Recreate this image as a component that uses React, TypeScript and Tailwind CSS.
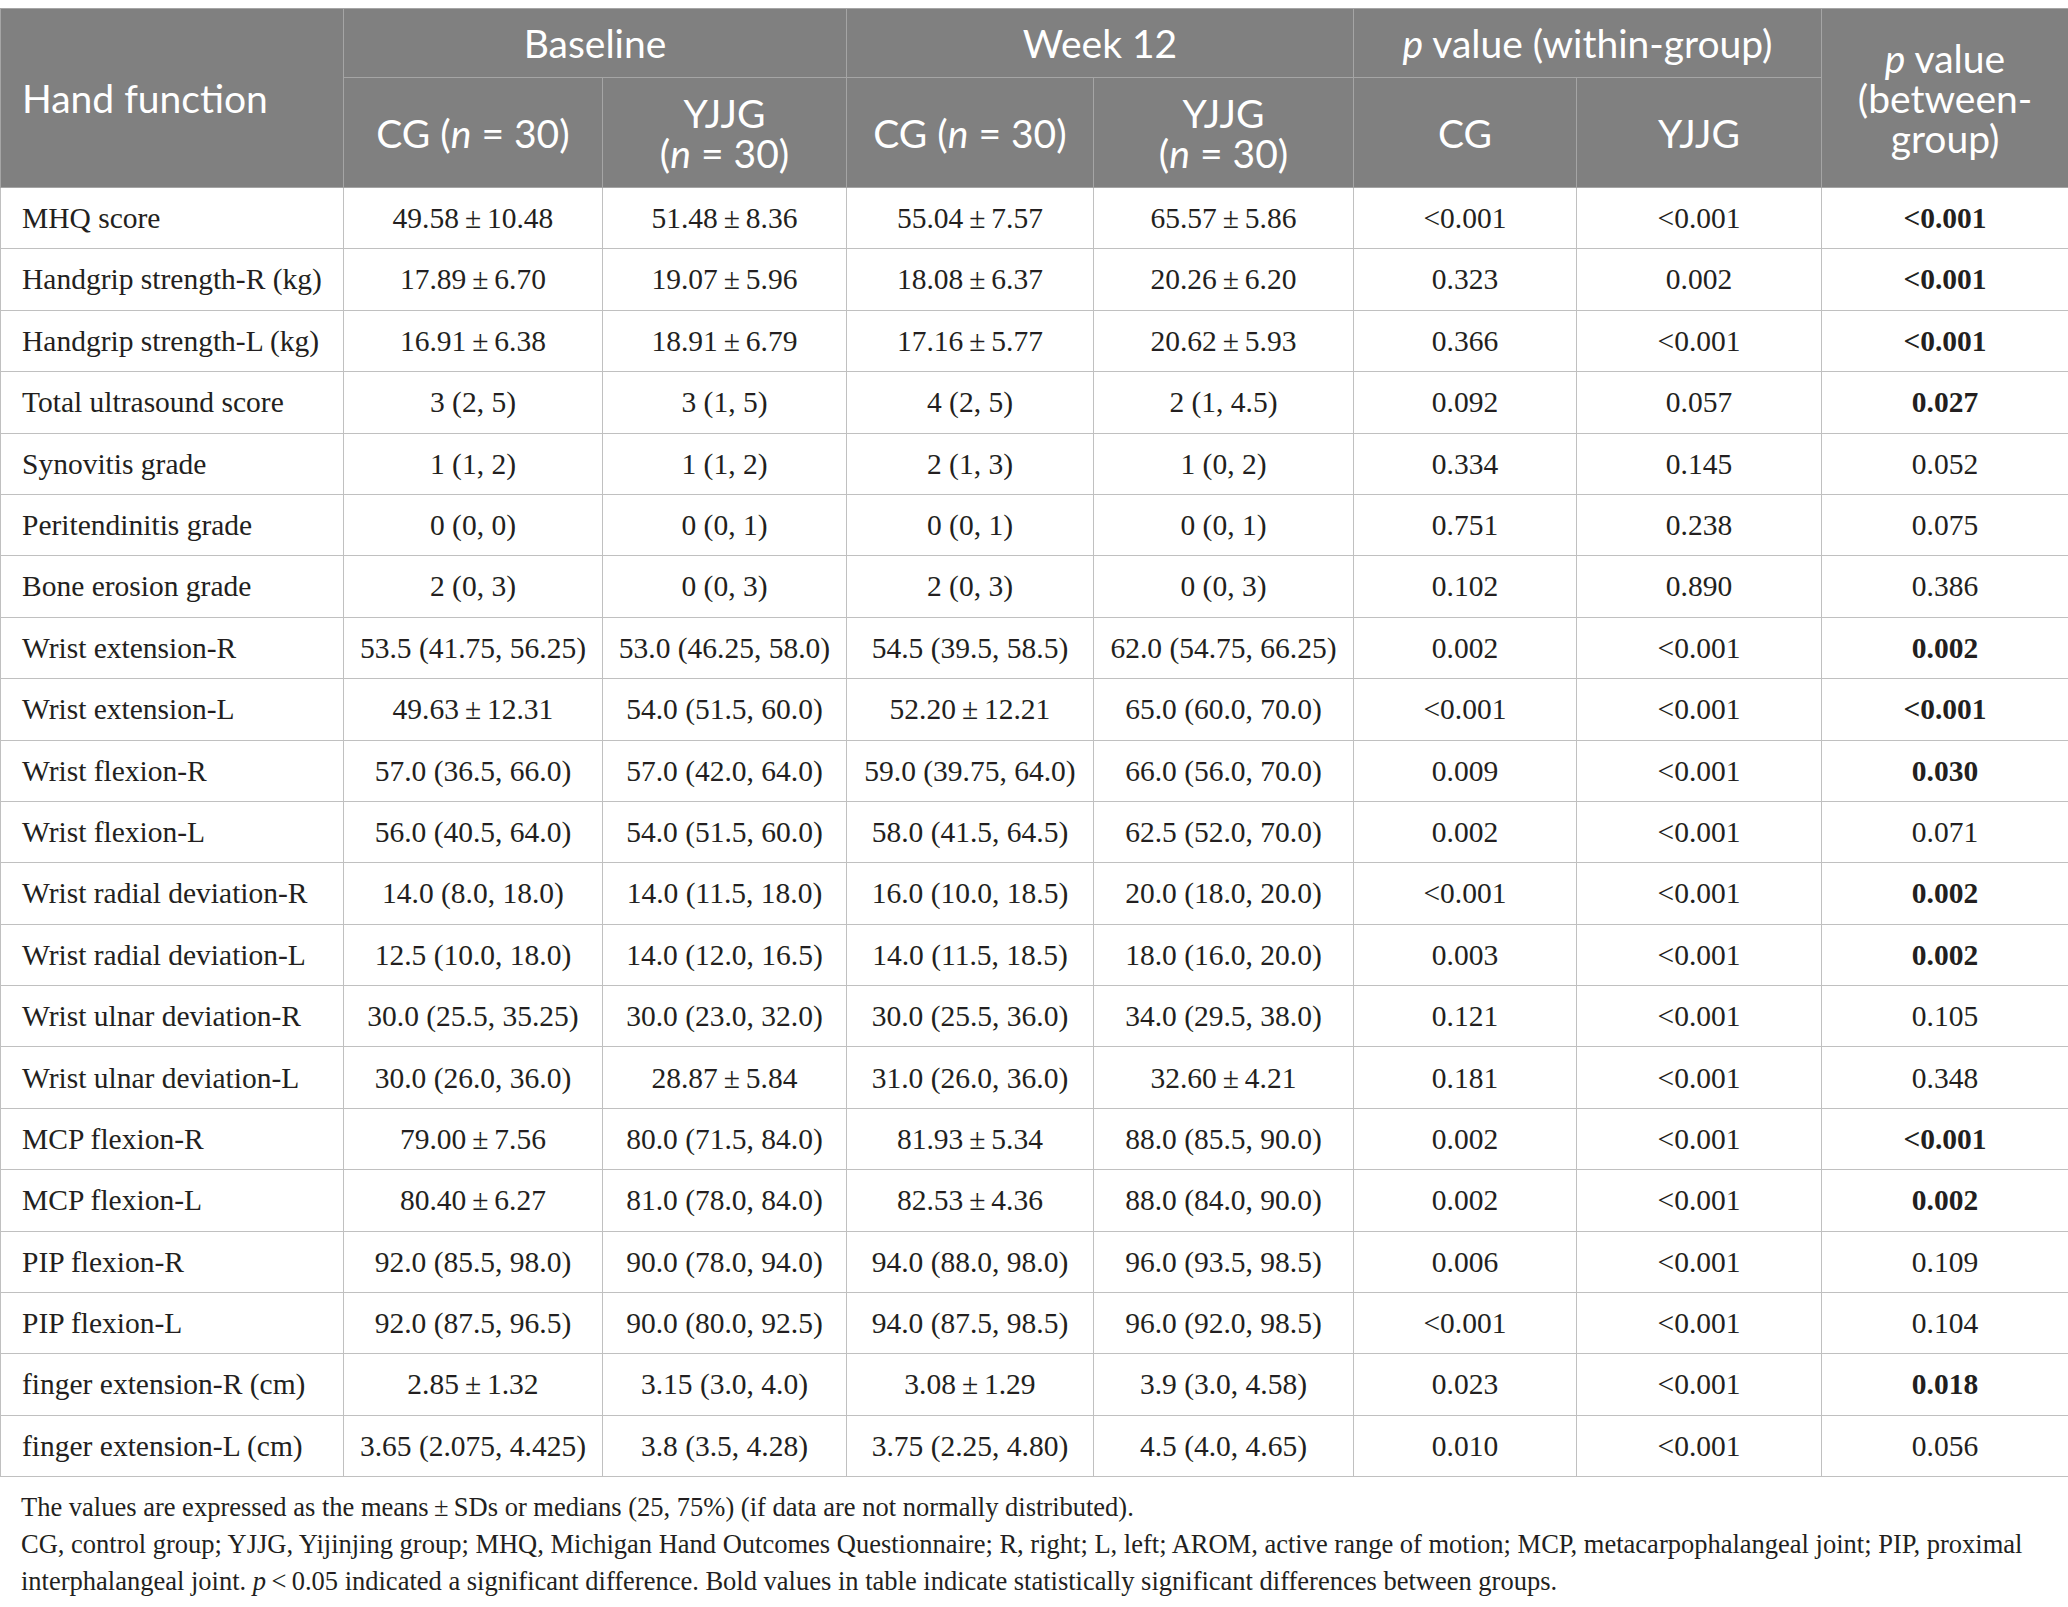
import React from "react";

type Row = {
  label: string;
  cells: string[];
  bold?: boolean;
};

const pm = (a: string, b: string) => `${a}\u2009±\u2009${b}`;

// Data rows of the hand function table
const rows: Row[] = [
  { label: "MHQ score", cells: [pm("49.58", "10.48"), pm("51.48", "8.36"), pm("55.04", "7.57"), pm("65.57", "5.86"), "<0.001", "<0.001", "<0.001"], bold: true },
  { label: "Handgrip strength-R (kg)", cells: [pm("17.89", "6.70"), pm("19.07", "5.96"), pm("18.08", "6.37"), pm("20.26", "6.20"), "0.323", "0.002", "<0.001"], bold: true },
  { label: "Handgrip strength-L (kg)", cells: [pm("16.91", "6.38"), pm("18.91", "6.79"), pm("17.16", "5.77"), pm("20.62", "5.93"), "0.366", "<0.001", "<0.001"], bold: true },
  { label: "Total ultrasound score", cells: ["3 (2, 5)", "3 (1, 5)", "4 (2, 5)", "2 (1, 4.5)", "0.092", "0.057", "0.027"], bold: true },
  { label: "Synovitis grade", cells: ["1 (1, 2)", "1 (1, 2)", "2 (1, 3)", "1 (0, 2)", "0.334", "0.145", "0.052"] },
  { label: "Peritendinitis grade", cells: ["0 (0, 0)", "0 (0, 1)", "0 (0, 1)", "0 (0, 1)", "0.751", "0.238", "0.075"] },
  { label: "Bone erosion grade", cells: ["2 (0, 3)", "0 (0, 3)", "2 (0, 3)", "0 (0, 3)", "0.102", "0.890", "0.386"] },
  { label: "Wrist extension-R", cells: ["53.5 (41.75, 56.25)", "53.0 (46.25, 58.0)", "54.5 (39.5, 58.5)", "62.0 (54.75, 66.25)", "0.002", "<0.001", "0.002"], bold: true },
  { label: "Wrist extension-L", cells: [pm("49.63", "12.31"), "54.0 (51.5, 60.0)", pm("52.20", "12.21"), "65.0 (60.0, 70.0)", "<0.001", "<0.001", "<0.001"], bold: true },
  { label: "Wrist flexion-R", cells: ["57.0 (36.5, 66.0)", "57.0 (42.0, 64.0)", "59.0 (39.75, 64.0)", "66.0 (56.0, 70.0)", "0.009", "<0.001", "0.030"], bold: true },
  { label: "Wrist flexion-L", cells: ["56.0 (40.5, 64.0)", "54.0 (51.5, 60.0)", "58.0 (41.5, 64.5)", "62.5 (52.0, 70.0)", "0.002", "<0.001", "0.071"] },
  { label: "Wrist radial deviation-R", cells: ["14.0 (8.0, 18.0)", "14.0 (11.5, 18.0)", "16.0 (10.0, 18.5)", "20.0 (18.0, 20.0)", "<0.001", "<0.001", "0.002"], bold: true },
  { label: "Wrist radial deviation-L", cells: ["12.5 (10.0, 18.0)", "14.0 (12.0, 16.5)", "14.0 (11.5, 18.5)", "18.0 (16.0, 20.0)", "0.003", "<0.001", "0.002"], bold: true },
  { label: "Wrist ulnar deviation-R", cells: ["30.0 (25.5, 35.25)", "30.0 (23.0, 32.0)", "30.0 (25.5, 36.0)", "34.0 (29.5, 38.0)", "0.121", "<0.001", "0.105"] },
  { label: "Wrist ulnar deviation-L", cells: ["30.0 (26.0, 36.0)", pm("28.87", "5.84"), "31.0 (26.0, 36.0)", pm("32.60", "4.21"), "0.181", "<0.001", "0.348"] },
  { label: "MCP flexion-R", cells: [pm("79.00", "7.56"), "80.0 (71.5, 84.0)", pm("81.93", "5.34"), "88.0 (85.5, 90.0)", "0.002", "<0.001", "<0.001"], bold: true },
  { label: "MCP flexion-L", cells: [pm("80.40", "6.27"), "81.0 (78.0, 84.0)", pm("82.53", "4.36"), "88.0 (84.0, 90.0)", "0.002", "<0.001", "0.002"], bold: true },
  { label: "PIP flexion-R", cells: ["92.0 (85.5, 98.0)", "90.0 (78.0, 94.0)", "94.0 (88.0, 98.0)", "96.0 (93.5, 98.5)", "0.006", "<0.001", "0.109"] },
  { label: "PIP flexion-L", cells: ["92.0 (87.5, 96.5)", "90.0 (80.0, 92.5)", "94.0 (87.5, 98.5)", "96.0 (92.0, 98.5)", "<0.001", "<0.001", "0.104"] },
  { label: "finger extension-R (cm)", cells: [pm("2.85", "1.32"), "3.15 (3.0, 4.0)", pm("3.08", "1.29"), "3.9 (3.0, 4.58)", "0.023", "<0.001", "0.018"], bold: true },
  { label: "finger extension-L (cm)", cells: ["3.65 (2.075, 4.425)", "3.8 (3.5, 4.28)", "3.75 (2.25, 4.80)", "4.5 (4.0, 4.65)", "0.010", "<0.001", "0.056"] },
];

const th = "border border-[#a5a5a5] px-3 font-normal";
const td = "border border-[#c0c0c0] h-[61.4px] px-2 text-center";

const App = () => {
  return (
    <div className="min-h-screen bg-white pt-2 text-[#231f20]">
      <table className="w-[2068px] table-fixed border-collapse">
        <colgroup>
          <col className="w-[343px]" />
          <col className="w-[259px]" />
          <col className="w-[244px]" />
          <col className="w-[247px]" />
          <col className="w-[260px]" />
          <col className="w-[223px]" />
          <col className="w-[245px]" />
          <col className="w-[247px]" />
        </colgroup>
        <thead className="bg-[#808080] text-[39px] leading-[40px] text-white [font-family:Lato,sans-serif]">
          <tr className="h-[69px]">
            <th rowSpan={2} className={`${th} pl-[21px] text-left`}>
              Hand function
            </th>
            <th colSpan={2} className={th}>
              Baseline
            </th>
            <th colSpan={2} className={th}>
              Week 12
            </th>
            <th colSpan={2} className={th}>
              <i>p</i> value (within-group)
            </th>
            <th rowSpan={2} className={th}>
              <i>p</i> value
              <br />
              (between-
              <br />
              group)
            </th>
          </tr>
          <tr className="h-[110px]">
            <th className={th}>
              CG (<i>n</i> = 30)
            </th>
            <th className={th}>
              YJJG
              <br />(<i>n</i> = 30)
            </th>
            <th className={th}>
              CG (<i>n</i> = 30)
            </th>
            <th className={th}>
              YJJG
              <br />(<i>n</i> = 30)
            </th>
            <th className={th}>CG</th>
            <th className={th}>YJJG</th>
          </tr>
        </thead>
        <tbody className="text-[29.5px] [font-family:'Liberation_Serif',serif]">
          {rows.map((row) => (
            <tr key={row.label}>
              <td className={`${td} pl-[21px] text-left`}>{row.label}</td>
              {row.cells.map((cell, i) => (
                <td
                  key={i}
                  className={`${td} ${i === 6 && row.bold ? "font-bold" : ""}`}
                >
                  {cell}
                </td>
              ))}
            </tr>
          ))}
        </tbody>
      </table>

      <div className="mt-3 pl-[21px] text-[26.5px] leading-[37px] [font-family:'Liberation_Serif',serif]">
        <p>
          The values are expressed as the means{"\u2009"}±{"\u2009"}SDs or medians (25, 75%) (if data are not normally distributed).
        </p>
        <p>
          CG, control group; YJJG, Yijinjing group; MHQ, Michigan Hand Outcomes Questionnaire; R, right; L, left; AROM, active range of motion; MCP, metacarpophalangeal joint; PIP, proximal
          <br />
          interphalangeal joint. <i>p</i>{"\u2009"}&lt;{"\u2009"}0.05 indicated a significant difference. Bold values in table indicate statistically significant differences between groups.
        </p>
      </div>
    </div>
  );
};

export default App;
